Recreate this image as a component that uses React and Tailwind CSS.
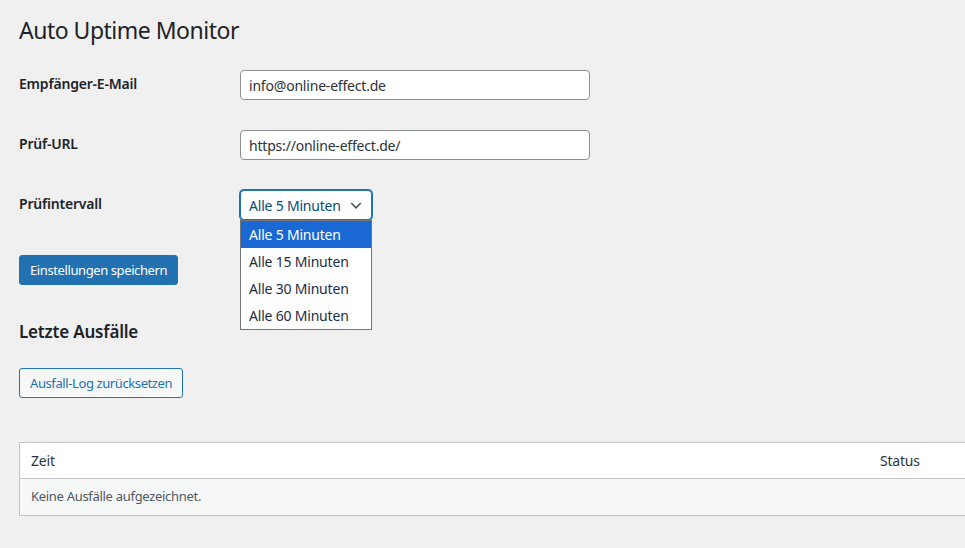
import React from 'react';

const font = { fontFamily: '"Noto Sans", "Open Sans", sans-serif' };

function Row({ label, children }) {
  return (
    <div className="flex">
      <div className="w-[221px] pt-[20px] pb-[20px] text-[14px] leading-[18px] font-semibold tracking-[-0.2px] text-[#1d2327]">{label}</div>
      <div className="py-[15px]">{children}</div>
    </div>
  );
}

export default function App() {
  const options = ['Alle 5 Minuten', 'Alle 15 Minuten', 'Alle 30 Minuten', 'Alle 60 Minuten'];
  return (
    <div className="min-h-screen w-full bg-[#f0f0f1] overflow-hidden" style={font}>
      <div className="pl-[19px] pt-[15px]">
        <h1 className="text-[23px] leading-[30px] font-normal tracking-[-0.5px] text-[#1d2327]">Auto Uptime Monitor</h1>

        <div className="mt-[10px]">
          <Row label="Empfänger-E-Mail">
            <div className="w-[350px] h-[30px] bg-white border border-[#8c8f94] rounded-[4px] px-[8px] flex items-center text-[14px] tracking-[-0.2px] text-[#2c3338]">
              info@online-effect.de
            </div>
          </Row>
          <Row label="Prüf-URL">
            <div className="w-[350px] h-[30px] bg-white border border-[#8c8f94] rounded-[4px] px-[8px] flex items-center text-[14px] tracking-[-0.2px] text-[#2c3338]">
              https://online-effect.de/
            </div>
          </Row>
          <Row label="Prüfintervall">
            <div className="relative">
              <div className="w-[132px] h-[30px] bg-white border border-[#2271b1] rounded-[4px] shadow-[0_0_0_1px_#2271b1] pl-[8px] pr-[7px] flex items-center justify-between text-[14px] tracking-[-0.2px] text-[#0a4b78]">
                <span>Alle 5 Minuten</span>
                <svg width="16" height="16" viewBox="0 0 20 20" className="text-[#50575e]">
                  <path d="M4 7.5l6 6 6-6" fill="none" stroke="currentColor" strokeWidth="2.2" />
                </svg>
              </div>
              <div className="absolute left-0 top-[30px] w-[132px] bg-white border border-[#767676] z-10">
                {options.map((o, i) => (
                  <div
                    key={o}
                    className={`h-[27px] pl-[8px] flex items-center text-[14px] tracking-[-0.2px] ${i === 0 ? 'bg-[#1a68d4] text-white' : 'text-[#1f2d44]'}`}
                  >
                    {o}
                  </div>
                ))}
              </div>
            </div>
          </Row>
        </div>

        <div className="mt-[20px]">
          <button className="h-[30px] px-[10px] bg-[#2271b1] border border-[#2271b1] rounded-[3px] text-white text-[13px] tracking-[-0.4px] leading-[28px]">
            Einstellungen speichern
          </button>
        </div>

        <h2 className="mt-[35px] text-[17px] leading-[24px] font-semibold tracking-[-0.2px] text-[#1d2327]">Letzte Ausfälle</h2>

        <div className="mt-[24px]">
          <button className="h-[30px] px-[10px] bg-[#f6f7f7] border border-[#2271b1] rounded-[3px] text-[#2271b1] text-[13px] tracking-[-0.4px] leading-[28px]">
            Ausfall-Log zurücksetzen
          </button>
        </div>

        <div className="mt-[44px] w-[960px] border border-[#c3c4c7] bg-white">
          <div className="h-[36px] flex items-center border-b border-[#c3c4c7] text-[14px] tracking-[-0.2px] text-[#2c3338]">
            <div className="pl-[11px] w-[860px]">Zeit</div>
            <div>Status</div>
          </div>
          <div className="h-[36px] flex items-center bg-[#f6f7f7] pl-[11px] text-[13px] tracking-[-0.3px] text-[#50575e]">
            Keine Ausfälle aufgezeichnet.
          </div>
        </div>
      </div>
    </div>
  );
}
